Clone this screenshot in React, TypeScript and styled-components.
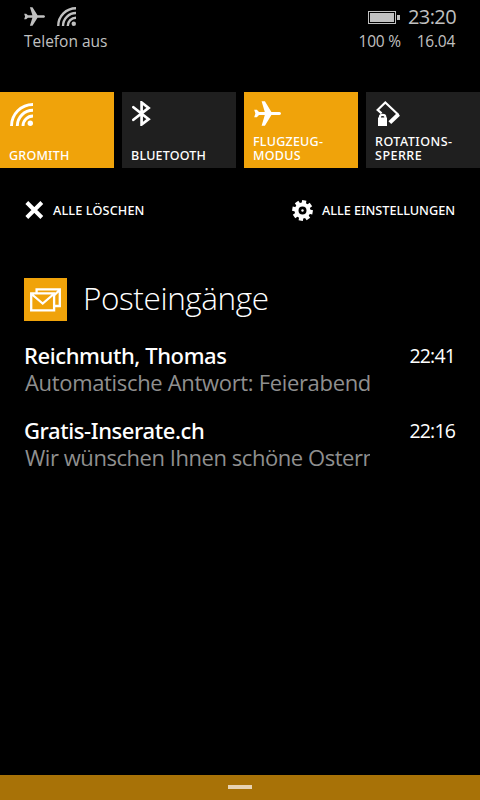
import React from "react";
import styled, { createGlobalStyle } from "styled-components";

const GlobalStyle = createGlobalStyle`
  body { margin: 0; background: #000; }
  * { box-sizing: border-box; }
  svg { display: block; flex: none; }
`;

const Screen = styled.div`
  width: 480px;
  height: 800px;
  display: flex;
  flex-direction: column;
  overflow: hidden;
  background: #000;
  color: #fff;
  font-family: "Open Sans", "Noto Sans", sans-serif;
`;

const StatusBar = styled.header`
  height: 92px;
  padding: 5px 24px 0;
  color: #c0c0c0;
`;

const StatusRow = styled.div<{ $height: number }>`
  display: flex;
  align-items: flex-start;
  justify-content: space-between;
  height: ${(p) => p.$height}px;
`;

const StatusIcons = styled.div`
  display: flex;
  gap: 12px;
  padding-top: 2px;
`;

const ClockGroup = styled.div`
  display: flex;
  gap: 8px;
  svg { margin-top: 6px; }
`;

const Clock = styled.span`
  font-size: 20px;
  line-height: 24px;
  letter-spacing: -0.6px;
`;

const StatusText = styled.span<{ $spacing?: number }>`
  font-size: 15.5px;
  line-height: 20px;
  letter-spacing: ${(p) => p.$spacing ?? 0}px;
  white-space: nowrap;
`;

const StatusTexts = styled.div`
  display: flex;
  gap: 16px;
  padding-right: 1px;
`;

const Tiles = styled.div`
  display: grid;
  grid-template-columns: repeat(4, 114px);
  gap: 8px;
  height: 76px;
`;

const Tile = styled.button<{ $on: boolean }>`
  display: flex;
  flex-direction: column;
  justify-content: space-between;
  align-items: flex-start;
  padding: 9px 0 6px 9px;
  border: 0;
  background: ${(p) => (p.$on ? "#f0a30a" : "#1f1f1f")};
  color: #fff;
  text-align: left;
`;

const TileLabel = styled.span<{ $spacing: number }>`
  font: 500 12.5px/13.5px "Noto Sans", sans-serif;
  letter-spacing: ${(p) => p.$spacing}px;
  white-space: pre-line;
`;

const Actions = styled.div`
  display: flex;
  justify-content: space-between;
  height: 24px;
  margin: 30px 25px 0;
`;

const Action = styled.button`
  display: flex;
  align-items: center;
  gap: 9px;
  padding: 0;
  border: 0;
  background: none;
  color: #fff;
  font: 500 12.7px/24px "Noto Sans", sans-serif;
`;

const ActionLabel = styled.span<{ $spacing: number }>`
  letter-spacing: ${(p) => p.$spacing}px;
`;

const Group = styled.section`
  flex: 1;
  margin-top: 56px;
  padding: 0 24px;
`;

const GroupHeader = styled.div`
  display: flex;
  gap: 16px;
  height: 43px;
`;

const AppBadge = styled.div`
  display: grid;
  place-items: center;
  width: 43px;
  height: 43px;
  background: #f0a30a;
`;

const GroupTitle = styled.h1`
  margin: 0;
  font-size: 31.5px;
  font-weight: 300;
  line-height: 40px;
  letter-spacing: -0.4px;
`;

const Notification = styled.article`
  display: flex;
  justify-content: space-between;
  height: 54px;
  margin-top: 21px;
`;

const Message = styled.div`
  width: 346px;
  overflow: hidden;
  white-space: nowrap;
`;

const Sender = styled.div<{ $spacing: number }>`
  font: 500 22px/27px "Noto Sans", sans-serif;
  letter-spacing: ${(p) => p.$spacing}px;
`;

const Subject = styled.div<{ $spacing: number }>`
  padding-left: 1px;
  font-size: 22px;
  line-height: 27px;
  letter-spacing: ${(p) => p.$spacing}px;
  color: #8f8f8f;
`;

const Time = styled.time`
  font-size: 19.5px;
  line-height: 27px;
  letter-spacing: -0.85px;
  padding-right: 1px;
`;

const Drawer = styled.footer`
  display: flex;
  justify-content: center;
  height: 25px;
  padding-top: 10px;
  background: #a87207;
`;

const Handle = styled.div`
  width: 24px;
  height: 4px;
  background: #e7d3b3;
`;

const Wifi = ({ size }: { size: number }) => (
  <svg width={size} height={size} viewBox="0 0 23 23" fill="none" stroke="currentColor" strokeWidth="2.9">
    <path d="M1.5 23A21.5 21.5 0 0 1 23 1.5M7.3 23A15.7 15.7 0 0 1 23 7.3M13 23A10 10 0 0 1 23 13" />
    <circle cx="20.3" cy="20.3" r="2.7" fill="currentColor" stroke="none" />
  </svg>
);

const TileWifi = styled.div`
  padding: 2px 0 0 1px;
`;

const TilePlane = styled.div`
  padding-left: 1px;
`;

const Plane = ({ width, height }: { width: number; height: number }) => (
  <svg width={width} height={height} viewBox="0 0 27 25" fill="currentColor" preserveAspectRatio="none">
    <path d="M.2 8.8H2.8L5 10.9H10.8L7.6.2H10.9L17.4 10.9H25.5Q27 11.2 27 12.5T25.5 14.1H17.4L10.9 24.8H7.6L10.8 14.1H5L2.8 16.2H.2L1.4 12.5Z" />
  </svg>
);

const Battery = () => (
  <svg width="32" height="13" viewBox="0 0 32 13">
    <rect x=".5" y=".5" width="27" height="12" fill="none" stroke="currentColor" />
    <path d="M2 2H26V11H2ZM29 4H32V9H29Z" fill="currentColor" />
  </svg>
);

const Bluetooth = () => (
  <svg width="20" height="25" viewBox="-1 0 20 25" fill="none" stroke="currentColor" strokeWidth="2.7" strokeLinecap="round">
    <path d="M1.4 6.2L16.6 18.2L9.6 23.5V1.5L16.6 6.9L1.4 18.8" />
  </svg>
);

const RotationLock = () => (
  <svg width="26" height="25" viewBox="-1 0 26 25" fill="none" stroke="currentColor" strokeWidth="2.1">
    <path d="M5.6 12.4L1.6 8.9L9.3 1.5L22.6 14" />
    <path d="M22.6 13.2L13.8 21.6" strokeWidth="4" />
    <path d="M3.9 17V15.8Q3.9 13.9 6.6 13.9T9.3 15.8V17" />
    <path d="M2 16.5H11V25H2Z" fill="currentColor" stroke="none" />
  </svg>
);

const Cross = () => (
  <svg width="19" height="18" viewBox="0 0 19 18" stroke="currentColor" strokeWidth="4">
    <path d="M1.8 1.5L16.8 16.5M16.8 1.5L1.8 16.5" />
  </svg>
);

const Gear = () => (
  <svg width="21" height="21" viewBox="-10.5 -10.5 21 21" stroke="currentColor" fill="none">
    <circle r="6" strokeWidth="4" />
    {[0, 45, 90, 135, 180, 225, 270, 315].map((a) => (
      <path key={a} d="M0-7V-10.3" strokeWidth="4.3" transform={`rotate(${a + 10})`} />
    ))}
    <circle r="1.2" fill="currentColor" stroke="none" />
  </svg>
);

const Mails = () => (
  <svg width="31" height="24" viewBox="0 0 31 24" fill="none" stroke="currentColor" strokeWidth="2.3">
    <path d="M1.2 5.4H24.1V22.4H1.2ZM1.5 6L12.7 15.6L23.8 6" />
    <path d="M6.6 5V1.4H29.8V18H25M24.5 7L29.6 2" />
  </svg>
);

const tiles = [
  { label: "GROMITH", on: true, spacing: 0.2, icon: <TileWifi><Wifi size={23} /></TileWifi> },
  { label: "BLUETOOTH", on: false, spacing: 0.2, icon: <Bluetooth /> },
  { label: "FLUGZEUG-\nMODUS", on: true, spacing: 0.25, icon: <TilePlane><Plane width={27} height={25} /></TilePlane> },
  { label: "ROTATIONS-\nSPERRE", on: false, spacing: 0.5, icon: <RotationLock /> },
];

const notifications = [
  { sender: "Reichmuth, Thomas", subject: "Automatische Antwort: Feierabend", time: "22:41", senderGap: -0.4, subjectGap: -0.33 },
  { sender: "Gratis-Inserate.ch", subject: "Wir wünschen Ihnen schöne Ostern", time: "22:16", senderGap: -0.4, subjectGap: -0.45 },
];

export default function App() {
  return (
    <Screen>
      <GlobalStyle />
      <StatusBar>
        <StatusRow $height={26}>
          <StatusIcons>
            <Plane width={21} height={19} />
            <Wifi size={19} />
          </StatusIcons>
          <ClockGroup>
            <Battery />
            <Clock>23:20</Clock>
          </ClockGroup>
        </StatusRow>
        <StatusRow $height={20}>
          <StatusText>Telefon aus</StatusText>
          <StatusTexts>
            <StatusText $spacing={-0.25}>100 %</StatusText>
            <StatusText $spacing={-0.25}>16.04</StatusText>
          </StatusTexts>
        </StatusRow>
      </StatusBar>
      <Tiles>
        {tiles.map((t) => (
          <Tile key={t.label} $on={t.on}>
            {t.icon}
            <TileLabel $spacing={t.spacing}>{t.label}</TileLabel>
          </Tile>
        ))}
      </Tiles>
      <Actions>
        <Action>
          <Cross />
          <ActionLabel $spacing={0.12}>ALLE LÖSCHEN</ActionLabel>
        </Action>
        <Action>
          <Gear />
          <ActionLabel $spacing={-0.03}>ALLE EINSTELLUNGEN</ActionLabel>
        </Action>
      </Actions>
      <Group>
        <GroupHeader>
          <AppBadge>
            <Mails />
          </AppBadge>
          <GroupTitle>Posteingänge</GroupTitle>
        </GroupHeader>
        {notifications.map((n) => (
          <Notification key={n.sender}>
            <Message>
              <Sender $spacing={n.senderGap}>{n.sender}</Sender>
              <Subject $spacing={n.subjectGap}>{n.subject}</Subject>
            </Message>
            <Time>{n.time}</Time>
          </Notification>
        ))}
      </Group>
      <Drawer>
        <Handle />
      </Drawer>
    </Screen>
  );
}
